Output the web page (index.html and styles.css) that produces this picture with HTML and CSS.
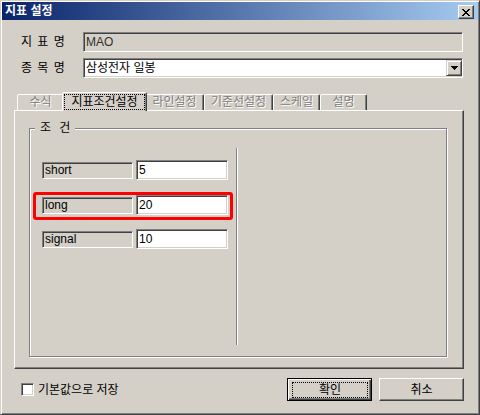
FILE: index.html
```html
<!DOCTYPE html>
<html lang="ko">
<head>
<meta charset="utf-8">
<title>지표 설정</title>
<link rel="stylesheet" href="styles.css">
</head>
<body>
<div class="window">
  <div class="titlebar">
    <span class="title">지표 설정</span>
    <span class="close-btn">
      <svg width="8" height="7" viewBox="0 0 8 7" shape-rendering="crispEdges">
        <rect x="0" y="0" width="2" height="1"/><rect x="6" y="0" width="2" height="1"/>
        <rect x="1" y="1" width="2" height="1"/><rect x="5" y="1" width="2" height="1"/>
        <rect x="2" y="2" width="4" height="1"/>
        <rect x="3" y="3" width="2" height="1"/>
        <rect x="2" y="4" width="4" height="1"/>
        <rect x="1" y="5" width="2" height="1"/><rect x="5" y="5" width="2" height="1"/>
        <rect x="0" y="6" width="2" height="1"/><rect x="6" y="6" width="2" height="1"/>
      </svg>
    </span>
  </div>
  <div class="content">
    <div class="field-row">
      <span class="field-label">지 표 명</span>
      <div class="field field-readonly">MAO</div>
    </div>
    <div class="field-row">
      <span class="field-label">종 목 명</span>
      <div class="field combo">
        <span class="combo-text">삼성전자 일봉</span>
        <span class="combo-btn">
          <svg width="7" height="4" viewBox="0 0 7 4" shape-rendering="crispEdges">
            <rect x="0" y="0" width="7" height="1"/>
            <rect x="1" y="1" width="5" height="1"/>
            <rect x="2" y="2" width="3" height="1"/>
            <rect x="3" y="3" width="1" height="1"/>
          </svg>
        </span>
      </div>
    </div>
    <div class="tabs">
      <span class="tab tab-w47">수식</span>
      <span class="tab tab-active"><span class="tab-focus">지표조건설정</span></span>
      <span class="tab tab-w59">라인설정</span>
      <span class="tab tab-w69">기준선설정</span>
      <span class="tab tab-w47">스케일</span>
      <span class="tab tab-w47">설명</span>
    </div>
    <div class="panel">
      <div class="group">
        <span class="group-title">조 건</span>
        <div class="group-body">
          <div class="params">
            <div class="param-row">
              <span class="param-label">short</span>
              <span class="param-input">5</span>
            </div>
            <div class="highlight">
              <div class="param-row">
                <span class="param-label">long</span>
                <span class="param-input">20</span>
              </div>
            </div>
            <div class="param-row param-row-last">
              <span class="param-label">signal</span>
              <span class="param-input">10</span>
            </div>
          </div>
          <div class="separator"></div>
        </div>
      </div>
    </div>
    <div class="footer">
      <span class="checkbox"></span>
      <span class="check-label">기본값으로 저장</span>
      <span class="btn btn-default"><span class="btn-focus">확인</span></span>
      <span class="btn btn-cancel">취소</span>
    </div>
  </div>
</div>
</body>
</html>
```

FILE: styles.css
```css
* {
  box-sizing: border-box;
  margin: 0;
  padding: 0;
}

html, body {
  width: 480px;
  height: 415px;
  overflow: hidden;
}

body {
  background: #d4d0c8;
  font-family: "Liberation Sans", "Noto Sans CJK KR", sans-serif;
  font-size: 12px;
  line-height: 14px;
  color: #000;
}

.window {
  width: 480px;
  height: 415px;
  padding: 1px;
  background: #d4d0c8;
  border: 1px solid;
  border-color: #d4d0c8 #404040 #404040 #d4d0c8;
  box-shadow: inset 1px 1px 0 #fff, inset -1px -1px 0 #808080;
  display: flex;
  flex-direction: column;
}

/* title bar */
.titlebar {
  height: 18px;
  display: flex;
  justify-content: space-between;
  align-items: flex-start;
  padding: 0 4px 0 3px;
  background: linear-gradient(to right, #0a246a, #a6caf0);
}

.title {
  color: #fff;
  font-weight: bold;
  line-height: 18px;
}

.close-btn {
  width: 16px;
  height: 14px;
  margin-top: 3px;
  display: flex;
  align-items: center;
  justify-content: center;
  background: #d4d0c8;
  border: 1px solid;
  border-color: #fff #404040 #404040 #fff;
  box-shadow: inset -1px -1px 0 #808080;
}

.close-btn svg {
  fill: #000;
  display: block;
}

/* content */
.content {
  display: flex;
  flex-direction: column;
  padding: 12px 14px 0 12px;
}

.field-row {
  display: flex;
  align-items: center;
  height: 20px;
  margin-left: 7px;
}

.field-row + .field-row {
  margin-top: 6px;
}

.field-label {
  width: 62px;
  line-height: 14px;
  word-spacing: 2px;
}

.field {
  width: 380px;
  height: 20px;
  border: 1px solid;
  border-color: #808080 #fff #fff #808080;
  box-shadow: inset 1px 1px 0 #404040, inset -1px -1px 0 #d4d0c8;
  padding-left: 2px;
  line-height: 18px;
}

.field-readonly {
  background: #d4d0c8;
  color: #303030;
}

.combo {
  background: #fff;
  display: flex;
  align-items: center;
  justify-content: space-between;
  padding: 1px 0 1px 2px;
}

.combo-btn {
  width: 16px;
  height: 16px;
  display: flex;
  align-items: center;
  justify-content: center;
  background: #d4d0c8;
  border: 1px solid;
  border-color: #d4d0c8 #404040 #404040 #d4d0c8;
  box-shadow: inset 1px 1px 0 #fff, inset -1px -1px 0 #808080;
}

.combo-btn svg {
  display: block;
  fill: #000;
}

/* tabs */
.tabs {
  position: relative;
  z-index: 1;
  display: flex;
  align-items: flex-end;
  height: 19px;
  margin-top: 14px;
  margin-bottom: -1px;
  padding-left: 3px;
}

.tab {
  height: 16px;
  margin-bottom: 1px;
  border: 1px solid;
  border-bottom: none;
  border-color: #fff #404040 transparent #fff;
  border-radius: 2px 2px 0 0;
  box-shadow: inset -1px 0 0 #808080;
  background: #d4d0c8;
  text-align: center;
  line-height: 14px;
  color: #808080;
  text-shadow: 1px 1px 0 #fff;
}

.tab-w47 { width: 47px; }
.tab-w59 { width: 59px; }
.tab-w69 { width: 69px; }

.tab-active {
  position: relative;
  z-index: 2;
  width: 85px;
  height: 19px;
  margin: 0 -2px;
  color: #000;
  text-shadow: none;
  padding: 1px 1px 0 1px;
}

.tab-focus {
  display: block;
  height: 16px;
  line-height: 14px;
  border: 1px dotted #000;
}

/* panel */
.panel {
  width: 450px;
  height: 259px;
  border: 1px solid;
  border-color: #fff #404040 #404040 #fff;
  box-shadow: inset -1px -1px 0 #808080;
  padding: 17px 0 0 14px;
}

.group {
  width: 418px;
  height: 229px;
  border: 1px solid #808080;
  box-shadow: inset 1px 1px 0 #fff, 1px 1px 0 #fff;
}

.group-title {
  display: block;
  width: fit-content;
  height: 12px;
  line-height: 12px;
  margin: -7px 0 0 5px;
  padding: 0 5px;
  background: #d4d0c8;
  word-spacing: 5px;
}

.group-body {
  display: flex;
}

.params {
  width: 206px;
  padding: 26px 0 0 12px;
}

.separator {
  width: 2px;
  height: 197px;
  margin-top: 14px;
  border-left: 1px solid #808080;
  border-right: 1px solid #fff;
}

.param-row {
  display: flex;
  align-items: center;
  height: 20px;
}

.param-row-last {
  margin-top: 9px;
}

.param-label {
  width: 91px;
  height: 17px;
  border: 1px solid;
  border-color: #808080 #fff #fff #808080;
  box-shadow: inset 1px 1px 0 #404040;
  padding-left: 2px;
  line-height: 14px;
}

.param-input {
  width: 92px;
  height: 20px;
  margin-left: 3px;
  background: #fff;
  border: 1px solid;
  border-color: #808080 #fff #fff #808080;
  box-shadow: inset 1px 1px 0 #404040, inset -1px -1px 0 #d4d0c8;
  padding-left: 2px;
  line-height: 18px;
}

.highlight {
  width: fit-content;
  margin: 12px 0 0 -9px;
  border: 3px solid #f00;
  border-radius: 3px;
  padding: 0 2px 2px 6px;
}

/* footer */
.footer {
  display: flex;
  align-items: center;
  height: 23px;
  margin-top: 9px;
}

.checkbox {
  width: 13px;
  height: 13px;
  margin-left: 7px;
  background: #fff;
  border: 1px solid;
  border-color: #808080 #fff #fff #808080;
  box-shadow: inset 1px 1px 0 #404040, inset -1px -1px 0 #d4d0c8;
}

.check-label {
  margin-left: 4px;
}

.btn {
  width: 85px;
  height: 23px;
  display: flex;
  align-items: center;
  justify-content: center;
  background: #d4d0c8;
  border: 1px solid;
  border-color: #fff #404040 #404040 #fff;
  box-shadow: inset -1px -1px 0 #808080;
}

.btn-default {
  margin-left: auto;
  border-color: #000;
  box-shadow: inset 1px 1px 0 #fff, inset -1px -1px 0 #404040, inset -2px -2px 0 #808080;
  align-items: stretch;
  justify-content: stretch;
}

.btn-focus {
  flex: 1;
  margin: 3px 3px 2px 4px;
  border: 1px dotted #000;
  display: flex;
  align-items: center;
  justify-content: center;
}

.btn-cancel {
  margin-left: 7px;
}
```
